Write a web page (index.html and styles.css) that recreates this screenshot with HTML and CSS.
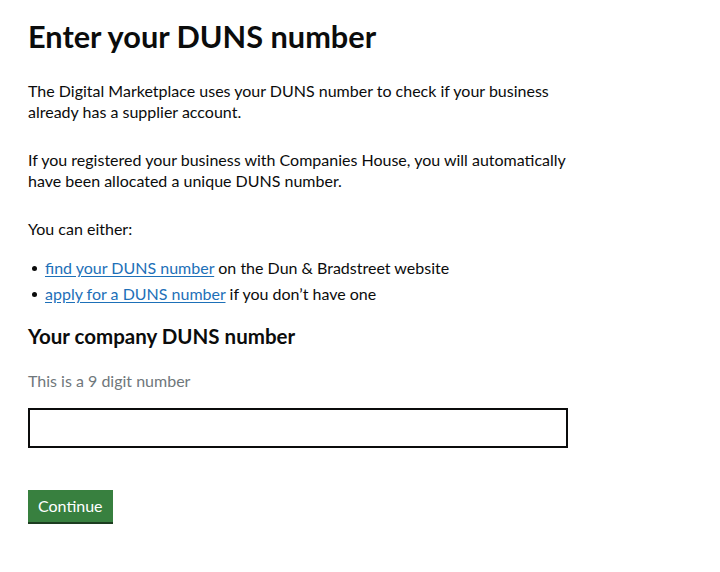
FILE: index.html
```html
<!DOCTYPE html>
<html lang="en">
<head>
<meta charset="utf-8">
<title>Enter your DUNS number</title>
<link rel="stylesheet" href="styles.css">
</head>
<body>
<main class="page">
  <h1 class="title">Enter your DUNS number</h1>
  <p class="body">The Digital Marketplace uses your DUNS number to check if your business already has a supplier account.</p>
  <p class="body">If you registered your business with Companies House, you will automatically have been allocated a unique DUNS number.</p>
  <p class="body">You can either:</p>
  <ul class="list">
    <li><a href="#" class="link">find your DUNS number</a> on the Dun &amp; Bradstreet website</li>
    <li><a href="#" class="link">apply for a DUNS number</a> if you don’t have one</li>
  </ul>
  <form class="form">
    <label class="label" for="duns">Your company DUNS number</label>
    <p class="hint">This is a 9 digit number</p>
    <input class="input" id="duns" type="text">
    <button class="button" type="button">Continue</button>
  </form>
</main>
</body>
</html>
```
FILE: styles.css
```css
html, body {
  margin: 0;
  padding: 0;
  background: #ffffff;
}
body {
  font-family: Lato, "Liberation Sans", sans-serif;
  color: #0b0c0c;
}
.page {
  padding: 19px 28px;
  width: 540px;
}
.title {
  font-size: 30.7px;
  font-weight: 700;
  line-height: 36px;
  margin: 0 0 25px;
}
.body {
  font-size: 16px;
  line-height: 21px;
  margin: 0 0 27px;
}
.list {
  list-style: none;
  padding: 0;
  margin: -11px 0 0;
  font-size: 16px;
  line-height: 26px;
}
.list li {
  position: relative;
  padding-left: 17px;
}
.list li::before {
  content: "";
  position: absolute;
  left: 4px;
  top: 11px;
  width: 5px;
  height: 5px;
  border-radius: 50%;
  background: #0b0c0c;
}
.link {
  color: #1d70b8;
  text-decoration: underline;
  text-underline-offset: 2px;
}
.form {
  display: flex;
  flex-direction: column;
  align-items: flex-start;
  margin-top: 17px;
}
.label {
  font-size: 20.5px;
  font-weight: 700;
  line-height: 24px;
}
.hint {
  font-size: 16px;
  line-height: 21px;
  color: #6f777b;
  margin: 22px 0 17px;
}
.input {
  box-sizing: border-box;
  width: 540px;
  height: 40px;
  border: 2px solid #0b0c0c;
  margin: 0;
  padding: 4px;
  font-size: 16px;
}
.button {
  margin-top: 42px;
  background: #38803f;
  color: #ffffff;
  border: 0;
  box-shadow: 0 2px 0 #1d3d20;
  font-family: inherit;
  font-size: 16px;
  line-height: 20px;
  padding: 6px 10px;
  cursor: pointer;
}
```
